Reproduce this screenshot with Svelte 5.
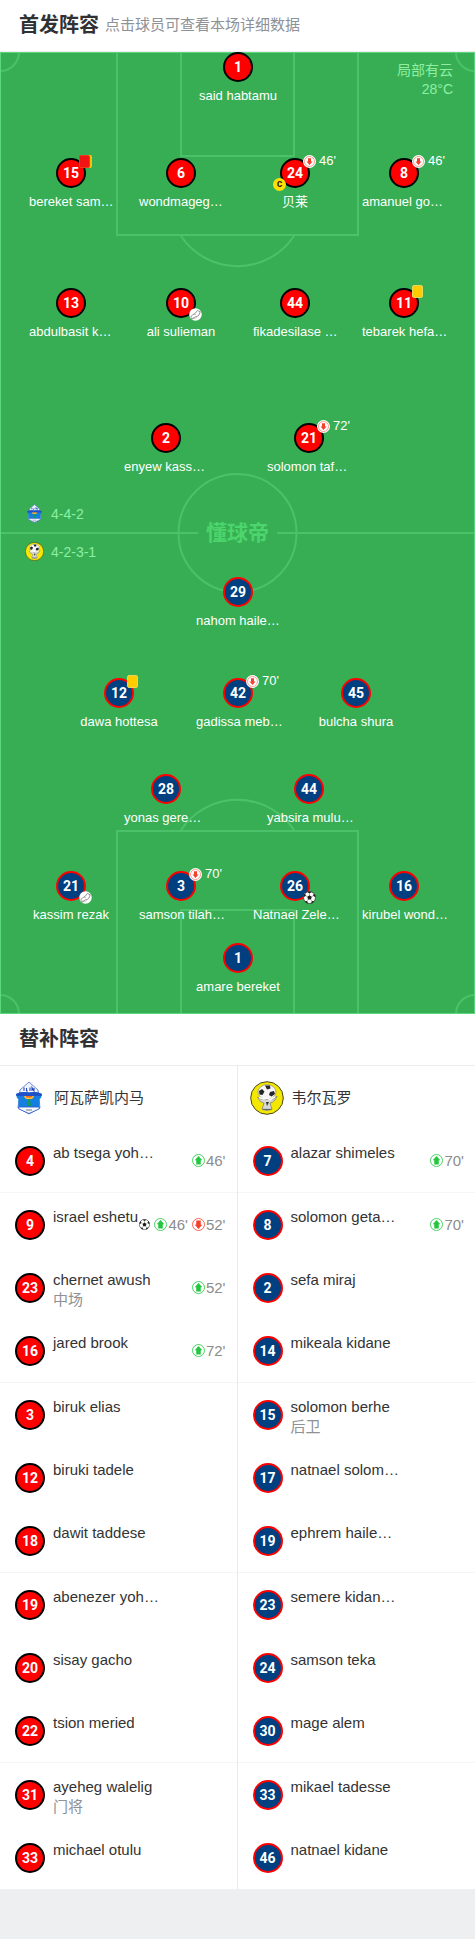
<script>
  // Coordinates are on a 475 × 962 pitch.
  const W = 475;
  const H = 962;

  const starters = [
    { n: 1, name: 'said habtamu', x: 238, y: 15, side: 'home' },
    { n: 15, name: 'bereket sam…', x: 71, y: 121, side: 'home', top: 'red' },
    { n: 6, name: 'wondmageg…', x: 181, y: 121, side: 'home' },
    { n: 24, name: '贝莱', x: 295, y: 121, side: 'home', out: "46'", captain: true },
    { n: 8, name: 'amanuel go…', x: 404, y: 121, side: 'home', out: "46'" },
    { n: 13, name: 'abdulbasit k…', x: 71, y: 251, side: 'home' },
    { n: 10, name: 'ali sulieman', x: 181, y: 251, side: 'home', low: 'boot' },
    { n: 44, name: 'fikadesilase …', x: 295, y: 251, side: 'home' },
    { n: 11, name: 'tebarek hefa…', x: 404, y: 251, side: 'home', top: 'yellow' },
    { n: 2, name: 'enyew kass…', x: 166, y: 386, side: 'home' },
    { n: 21, name: 'solomon taf…', x: 309, y: 386, side: 'home', out: "72'" },
    { n: 29, name: 'nahom haile…', x: 238, y: 540, side: 'away' },
    { n: 12, name: 'dawa hottesa', x: 119, y: 641, side: 'away', top: 'yellow' },
    { n: 42, name: 'gadissa meb…', x: 238, y: 641, side: 'away', out: "70'" },
    { n: 45, name: 'bulcha shura', x: 356, y: 641, side: 'away' },
    { n: 28, name: 'yonas gere…', x: 166, y: 737, side: 'away' },
    { n: 44, name: 'yabsira mulu…', x: 309, y: 737, side: 'away' },
    { n: 21, name: 'kassim rezak', x: 71, y: 834, side: 'away', low: 'boot' },
    { n: 3, name: 'samson tilah…', x: 181, y: 834, side: 'away', out: "70'" },
    { n: 26, name: 'Natnael Zele…', x: 295, y: 834, side: 'away', low: 'ball' },
    { n: 16, name: 'kirubel wond…', x: 404, y: 834, side: 'away' },
    { n: 1, name: 'amare bereket', x: 238, y: 906, side: 'away' }
  ];

  const bench = [
    {
      side: 'home',
      team: '阿瓦萨凯内马',
      players: [
        { n: 4, name: 'ab tsega yoh…', events: [['in', "46'"]] },
        { n: 9, name: 'israel eshetu', events: [['ball', ''], ['in', "46'"], ['out', "52'"]] },
        { n: 23, name: 'chernet awush', pos: '中场', events: [['in', "52'"]] },
        { n: 16, name: 'jared brook', events: [['in', "72'"]] },
        { n: 3, name: 'biruk elias' },
        { n: 12, name: 'biruki tadele' },
        { n: 18, name: 'dawit taddese' },
        { n: 19, name: 'abenezer yoh…' },
        { n: 20, name: 'sisay gacho' },
        { n: 22, name: 'tsion meried' },
        { n: 31, name: 'ayeheg walelig', pos: '门将' },
        { n: 33, name: 'michael otulu' }
      ]
    },
    {
      side: 'away',
      team: '韦尔瓦罗',
      players: [
        { n: 7, name: 'alazar shimeles', events: [['in', "70'"]] },
        { n: 8, name: 'solomon geta…', events: [['in', "70'"]] },
        { n: 2, name: 'sefa miraj' },
        { n: 14, name: 'mikeala kidane' },
        { n: 15, name: 'solomon berhe', pos: '后卫' },
        { n: 17, name: 'natnael solom…' },
        { n: 19, name: 'ephrem haile…' },
        { n: 23, name: 'semere kidan…' },
        { n: 24, name: 'samson teka' },
        { n: 30, name: 'mage alem' },
        { n: 33, name: 'mikael tadesse' },
        { n: 46, name: 'natnael kidane' }
      ]
    }
  ];
</script>

{#snippet swap(kind)}
  <svg class="icon" viewBox="0 0 26 26" aria-hidden="true">
    <circle cx="13" cy="13" r="13" fill="#fff" />
    <g fill={kind === 'in' ? '#22c73f' : '#f5402c'} transform={kind === 'in' ? null : 'rotate(180 13 13)'}>
      <path d="M13 4 20.500 12.500H17.500V21H8.500V12.500H5.500Z" />
    </g>
    <circle cx="13" cy="13" r="12" fill="none" stroke={kind === 'in' ? '#22c73f' : '#f5402c'} stroke-width="1.600" />
  </svg>
{/snippet}

{#snippet subbed()}
  <svg class="icon" viewBox="0 0 26 26" aria-hidden="true">
    <circle cx="13" cy="13" r="13" fill="#fff" />
    <path d="M13 20 19 13H16V6.500H10V13H7Z" fill="#f5402c" />
    <circle cx="13" cy="13" r="10" fill="none" stroke="#f5402c" stroke-width="1" />
  </svg>
{/snippet}

{#snippet ball()}
  <svg class="icon" viewBox="0 0 26 26" aria-hidden="true">
    <circle cx="13" cy="13" r="12" fill="#fff" stroke="#333" stroke-width="1.500" />
    <g fill="#1c1c1c">
      <path d="M13 8.500 17.500 11.700 15.800 17H10.200L8.500 11.700Z" />
      <path d="M8.500 1.800Q13 0 17.500 1.800L13 5Z" />
      <path d="M1 12.500Q1.200 8 4 5L6 9.500Z" />
      <path d="M25 12.500Q24.800 8 22 5L20 9.500Z" />
      <path d="M3.600 20.500Q6 24 9.500 24.800L8.500 19.800Z" />
      <path d="M22.400 20.500Q20 24 16.500 24.800L17.500 19.800Z" />
    </g>
    <path d="M13 5V9M6 9.500 9 12M20 9.500 17 12M8.500 19.800 10.500 16.500M17.500 19.800 15.500 16.500" stroke="#555" stroke-width="1" />
  </svg>
{/snippet}

{#snippet boot()}
  <svg class="icon" viewBox="0 0 26 26" aria-hidden="true">
    <circle cx="13" cy="13" r="12.500" fill="#fff" />
    <path d="M4 19Q3 16 7 14L13 10 17 4.500Q20 7 22.500 7.500L20 14Q18 17 13 17.500L8 20.500Q5 22 4 19ZM11 11.500 13 14" fill="none" stroke="#777" stroke-width="1.500" stroke-linejoin="round" />
    <path d="M4 21.500 7 22.500M9 22 11 20M13 20.500 15 19" stroke="#777" stroke-width="1.400" />
  </svg>
{/snippet}

{#snippet crest(side)}
  {#if side === 'home'}
    <svg class="crest" viewBox="0 0 34 34" aria-hidden="true">
      <path d="M17 1 26 9 28 27 17 33 6 27 8 9Z" fill="#eef4ff" stroke="#4a6bd0" stroke-width="0.800" />
      <path d="M11 8.500H23L24.500 12H9.500Z" fill="#fff" />
      <path d="M12 6.500V10M14.500 7V10H16M18 6.500V10M20 10V6.500L22 10V7" stroke="#2347bd" stroke-width="1.100" fill="none" />
      <path d="M4 13Q9 10 17 11.500 25 10 30 13L29 17 27.500 18V27H6.500V18L5 17Z" fill="#137fe0" />
      <path d="M4 13Q9 10 17 11.500 25 10 30 13L29.500 15H4.500Z" fill="#2050c8" />
      <path d="M12 15H22Q21.500 18 17 18.500 12.500 18 12 15Z" fill="#ffc42e" />
      <path d="M13.500 15H20.500L19.500 16.500H14.500Z" fill="#f2602c" />
      <path d="M16 18H18L19 25H15Z" fill="#17995a" />
      <path d="M6.500 26H27.500L27 28 17 32.500 7 28Z" fill="#f5f8ff" stroke="#2b59c5" stroke-width="0.800" />
      <path d="M14 29H20" stroke="#777" />
    </svg>
  {:else}
    <svg class="crest" viewBox="0 0 34 34" aria-hidden="true">
      <circle cx="17" cy="17" r="16.300" fill="#f5e800" stroke="#47451e" stroke-width="1" />
      <path d="M7.500 16Q10 22 14 22L12 28Q17 31 22 28L20 22Q25 21 27 15L24 18H11Z" fill="#d8d8d2" stroke="#777" stroke-width="0.700" />
      <ellipse cx="17" cy="11" rx="9" ry="7.300" fill="#f7f7f7" stroke="#888" stroke-width="0.700" />
      <path d="M9 10 12 8 14.500 10.500 12.500 14 9.500 13.500ZM15 4.500 20 4.500 20.500 7.500 17 8.500ZM20 11 24 10 25 13 21.500 15.500 19 14Z" fill="#262626" />
      <path d="M9 16.500 14 18 17 17 20 18.500 25 16" stroke="#fff" stroke-width="1.600" fill="none" />
      <path d="M16 21H19L17 25Z" fill="#333" />
      <path d="M12.500 28.500H21.500" stroke="#666" stroke-width="1.200" />
    </svg>
  {/if}
{/snippet}

<main>
  <header class="title-bar">
    <h2>首发阵容</h2>
    <p>点击球员可查看本场详细数据</p>
  </header>

  <section class="pitch" aria-label="首发阵容">
    <svg class="lines" viewBox="0 0 475 962" preserveAspectRatio="none" aria-hidden="true">
      <g fill="none" stroke="#4bc269" stroke-width="2">
        <path d="M117 0V183H358V0M181 0V104H294V0M181 184A68 68 0 0 0 294 184" />
        <path d="M117 962V779H358V962M181 962V858H294V962M181 778A68 68 0 0 1 294 778" />
        <path d="M0 19A19 19 0 0 0 19 0M475 19A19 19 0 0 1 456 0M0 943A19 19 0 0 1 19 962M475 943A19 19 0 0 0 456 962" />
        <path d="M0 481H198M277 481H475" />
        <circle cx="237.500" cy="481" r="59" />
      </g>
      <rect x="0.500" y="0.500" width="474" height="961" fill="none" stroke="#5bd87c" />
    </svg>

    <span class="watermark">懂球帝</span>
    <p class="weather">局部有云<br />28°C</p>
    <div class="formations">
      <div>{@render crest('home')}<span>4-4-2</span></div>
      <div>{@render crest('away')}<span>4-2-3-1</span></div>
    </div>

    {#each starters as p}
      <button class="player" style="left: {(p.x / W) * 100}%; top: {(p.y / H) * 100}%">
        <span class="shirt {p.side}">{p.n}</span>
        <span class="name" class:cut={p.name.endsWith('…')}>{p.name}</span>
        {#if p.top}<i class="card {p.top}"></i>{/if}
        {#if p.out}
          <span class="badge upper">{@render subbed()}<span>{p.out}</span></span>
        {/if}
        {#if p.captain}<span class="captain">c</span>{/if}
        {#if p.low}
          <span class="badge lower">
            {#if p.low === 'ball'}{@render ball()}{:else}{@render boot()}{/if}
          </span>
        {/if}
      </button>
    {/each}
  </section>

  <header class="title-bar bench-title">
    <h2>替补阵容</h2>
  </header>

  <section class="bench">
    {#each bench as group}
      <div class="column">
        <h3>{@render crest(group.side)}{group.team}</h3>
        <ul>
          {#each group.players as p}
            <li>
              <span class="shirt {group.side}">{p.n}</span>
              <div class="who">
                <span>{p.name}</span>
                {#if p.pos}<small>{p.pos}</small>{/if}
              </div>
              {#if p.events}
                <div class="events">
                  {#each p.events as [kind, minute]}
                    <span class="event {kind}">
                      {#if kind === 'ball'}{@render ball()}{:else}{@render swap(kind)}{minute}{/if}
                    </span>
                  {/each}
                </div>
              {/if}
            </li>
          {/each}
        </ul>
      </div>
    {/each}
  </section>
</main>

<style>
  :global(body) {
    background: #eeeff1;
  }
  main {
    padding-bottom: 50px;
    font-family: 'Liberation Sans', 'Noto Sans CJK SC', sans-serif;
    color: #333;
  }
  h2, h3, p, ul {
    margin: 0;
    padding: 0;
  }
  .title-bar {
    display: flex;
    align-items: center;
    gap: 6px;
    box-sizing: border-box;
    height: 52px;
    padding: 0 19px 2px;
    background: #fff;
    border-bottom: 1px solid #ededf0;
  }
  h2 {
    font-size: 20px;
    line-height: 28px;
    font-weight: 700;
    color: #303134;
  }
  .title-bar p {
    font-size: 15px;
    line-height: 20px;
    color: #8e9196;
  }

  .pitch {
    position: relative;
    aspect-ratio: 475 / 962;
    background: #37ae54;
  }
  .lines {
    display: block;
    width: 100%;
    height: 100%;
  }
  .watermark {
    position: absolute;
    left: 50%;
    top: 50%;
    transform: translate(-50%, -50%);
    font-size: 21px;
    line-height: 26px;
    font-weight: 700;
    color: #4bd56c;
  }
  .weather {
    position: absolute;
    top: 9px;
    right: 22px;
    text-align: right;
    font-size: 14px;
    line-height: 19px;
    color: #8eeea4;
  }
  .formations {
    position: absolute;
    left: 25px;
    top: 48%;
    transform: translateY(-10px);
    display: grid;
    gap: 18px;
    font-size: 14px;
    line-height: 20px;
    color: #8eeea4;
  }
  .formations div {
    display: flex;
    align-items: center;
    gap: 7px;
  }
  .formations .crest {
    width: 19px;
    height: 19px;
  }

  .player {
    position: absolute;
    display: flex;
    flex-direction: column;
    align-items: center;
    gap: 5px;
    width: 84px;
    padding: 0;
    border: 0;
    background: none;
    transform: translate(-42px, -15px);
    font: 13px/18px 'Liberation Sans', 'Noto Sans CJK SC', sans-serif;
    color: #fff;
    white-space: nowrap;
    cursor: pointer;
  }
  .shirt {
    display: flex;
    align-items: center;
    justify-content: center;
    flex: none;
    box-sizing: border-box;
    width: 30px;
    height: 30px;
    border-radius: 50%;
    font: 700 14px/20px Roboto, sans-serif;
    color: #fff;
  }
  .home {
    background: #f00;
    border: 2px solid #000;
  }
  .away {
    background: #003f80;
    border: 2px solid #f00;
  }
  .cut {
    width: 84px;
    text-align: left;
  }
  .icon {
    display: block;
    flex: none;
    width: 13px;
    height: 13px;
  }
  .badge {
    position: absolute;
    left: 50px;
    display: flex;
    align-items: center;
    gap: 3px;
  }
  .upper {
    top: -6px;
  }
  .lower {
    top: 20px;
  }
  .captain {
    position: absolute;
    left: 20px;
    top: 20px;
    width: 13px;
    height: 13px;
    border-radius: 50%;
    background: #ffdf00;
    color: #222;
    font: 700 10px/11px 'Liberation Sans', sans-serif;
  }
  .card {
    position: absolute;
    left: 50px;
    top: -3px;
    box-sizing: border-box;
    width: 11px;
    height: 13px;
    border: 1px solid #e3d75c;
    border-radius: 2px;
    background: #fc0;
  }
  .card.red {
    border-color: #f03a1c;
    background: #f01414;
    box-shadow: 2px 0 0 #ffc400;
  }

  .bench-title {
    padding-bottom: 1px;
  }
  .bench {
    display: grid;
    grid-template-columns: 1fr 1fr;
    background: #fff;
  }
  .column:first-child {
    border-right: 1px solid #e9e9ec;
  }
  h3 {
    display: flex;
    align-items: center;
    gap: 8px;
    height: 63px;
    padding-left: 12px;
    font-size: 15px;
    line-height: 20px;
    font-weight: 400;
  }
  h3 .crest {
    width: 34px;
    height: 34px;
  }
  ul {
    list-style: none;
  }
  li {
    position: relative;
    display: flex;
    align-items: center;
    gap: 8px;
    height: 63px;
    padding: 0 11px 0 15px;
  }
  li:nth-child(3n + 1) {
    border-bottom: 1px solid #f5f5f7;
  }
  li:last-child {
    border-bottom: 0;
  }
  .who {
    display: grid;
    flex: 1;
    align-self: flex-start;
    padding-top: 14px;
    font-size: 15px;
    line-height: 20px;
    white-space: nowrap;
  }
  .who small {
    font-size: 15px;
    color: #8e9196;
  }
  .events {
    position: absolute;
    right: 11px;
    display: flex;
    align-items: center;
    gap: 4px;
    font-size: 15px;
    line-height: 20px;
    color: #8c8c8c;
  }
  .event {
    display: flex;
    align-items: center;
    gap: 1px;
  }
  .event.ball .icon {
    width: 11px;
    height: 11px;
  }
</style>
